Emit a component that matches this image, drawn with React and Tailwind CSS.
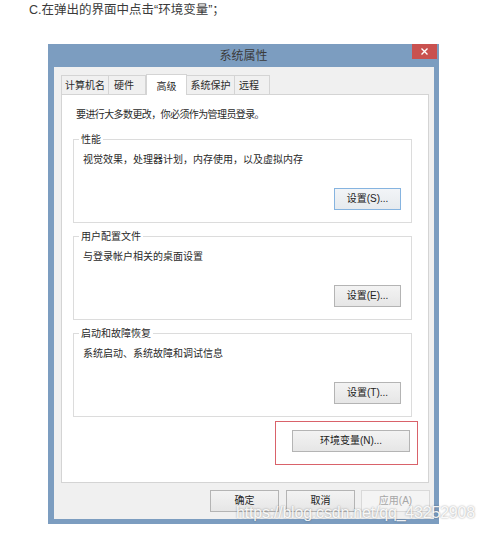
import React from "react";

const FONT = { fontFamily: '"Liberation Sans", "Noto Sans CJK SC", sans-serif' };

function Btn({ children, className = "" }) {
  return (
    <div
      className={`flex items-center justify-center h-[22px] border text-[10px] leading-none ${className}`}
    >
      {children}
    </div>
  );
}

function Group({ label, desc, btn, focused }) {
  return (
    <div className="relative ml-[11px] w-[339px] h-[84px] border border-[#dcdcdc] pt-[13px]">
      <span className="absolute -top-[7px] left-[5px] bg-white px-[2px] text-[10px] leading-[14px] text-[#2a2a2a]">
        {label}
      </span>
      <div className="pl-[9px] text-[10px] leading-[14px] text-[#2a2a2a]">{desc}</div>
      <div className="flex justify-end pr-[10px] mt-[21px]">
        <Btn
          className={`w-[67px] text-[#222] ${
            focused
              ? "border-[#86b4e0] bg-linear-to-b from-[#f2f4f7] to-[#e6eaee]"
              : "border-[#b4b4b4] bg-linear-to-b from-[#f3f3f3] to-[#e6e6e6]"
          }`}
        >
          {btn}
        </Btn>
      </div>
    </div>
  );
}

export default function App() {
  return (
    <div className="relative w-[490px] h-[534px] bg-white overflow-hidden" style={FONT}>
      <p className="pl-[29px] pt-[2px] text-[12.5px] leading-[16px] text-[#3a3a3a]">
        C.在弹出的界面中点击“环境变量”；
      </p>

      <div className="ml-[48px] mt-[26px] w-[391px] h-[480px] bg-[#7c9dc0] flex flex-col">
        <div className="relative h-[23px] flex items-center justify-center">
          <span className="text-[12px] leading-none text-[#3b3b3b]">系统属性</span>
          <div className="absolute top-0 right-[2px] w-[25px] h-[15px] bg-[#c9514f] flex items-center justify-center">
            <svg width="7" height="7" viewBox="0 0 7 7">
              <path d="M0.5 0.5 L6.5 6.5 M6.5 0.5 L0.5 6.5" stroke="#fff" strokeWidth="1.4" />
            </svg>
          </div>
        </div>

        <div className="ml-[6px] mr-[5px] mb-[5px] flex-1 bg-[#f0f0f0] pt-[7px] pl-[7px] pr-[4px] flex flex-col">
          {/* tabs */}
          <div className="flex items-end h-[20px] text-[10px] text-[#2a2a2a]">
            <div className="w-[48px] h-[19px] border border-[#d4d4d4] border-b-0 bg-[#f0f0f0] flex items-center justify-center pt-[1px]">
              计算机名
            </div>
            <div className="w-[37px] h-[19px] border border-l-0 border-[#d4d4d4] border-b-0 bg-[#f0f0f0] flex items-center pl-[5px] pt-[1px]">
              硬件
            </div>
            <div className="relative z-10 w-[41px] h-[21px] -mb-px border border-[#d4d4d4] border-b-0 bg-white flex items-start pt-[4px] justify-center">
              高级
            </div>
            <div className="w-[48px] h-[19px] border border-l-0 border-[#d4d4d4] border-b-0 bg-[#f0f0f0] flex items-center justify-center pt-[1px]">
              系统保护
            </div>
            <div className="w-[35px] h-[19px] border border-l-0 border-[#d4d4d4] border-b-0 bg-[#f0f0f0] flex items-center pl-[4px] pt-[1px]">
              远程
            </div>
          </div>

          {/* panel */}
          <div className="w-[368px] h-[389px] bg-white border border-[#d4d4d4] pt-[13px]">
            <div className="pl-[14px] text-[10px] leading-[14px] tracking-[-0.6px] text-[#2a2a2a]">
              要进行大多数更改，你必须作为管理员登录。
            </div>
            <div className="mt-[17px]">
              <Group label="性能" desc="视觉效果，处理器计划，内存使用，以及虚拟内存" btn="设置(S)..." focused />
            </div>
            <div className="mt-[13px]">
              <Group label="用户配置文件" desc="与登录帐户相关的桌面设置" btn="设置(E)..." />
            </div>
            <div className="mt-[13px]">
              <Group label="启动和故障恢复" desc="系统启动、系统故障和调试信息" btn="设置(T)..." />
            </div>
            <div className="ml-[213px] mt-[4px] w-[143px] h-[44px] border border-[#d9626a] pt-[8px] pl-[16px]">
              <Btn className="w-[118px] border-[#b4b4b4] bg-linear-to-b from-[#f3f3f3] to-[#e6e6e6] text-[#222]">
                环境变量(N)...
              </Btn>
            </div>
          </div>

          {/* bottom buttons */}
          <div className="flex justify-end mt-[7px]">
            <Btn className="w-[69px] border-[#b4b4b4] bg-linear-to-b from-[#f3f3f3] to-[#e6e6e6] text-[#222]">
              确定
            </Btn>
            <Btn className="ml-[7px] w-[69px] border-[#b4b4b4] bg-linear-to-b from-[#f3f3f3] to-[#e6e6e6] text-[#222]">
              取消
            </Btn>
            <Btn className="ml-[6px] w-[69px] border-[#d9d9d9] bg-[#f4f4f4] text-[#a6a6a6]">
              应用(A)
            </Btn>
          </div>
        </div>
      </div>

      <div className="absolute left-[236px] top-[503px] text-[16px] leading-[20px] tracking-[-0.2px] text-[rgba(255,255,255,0.92)] [text-shadow:0_0_2px_rgba(0,0,0,0.4)] whitespace-nowrap">
        https://blog.csdn.net/qq_43252908
      </div>
    </div>
  );
}
